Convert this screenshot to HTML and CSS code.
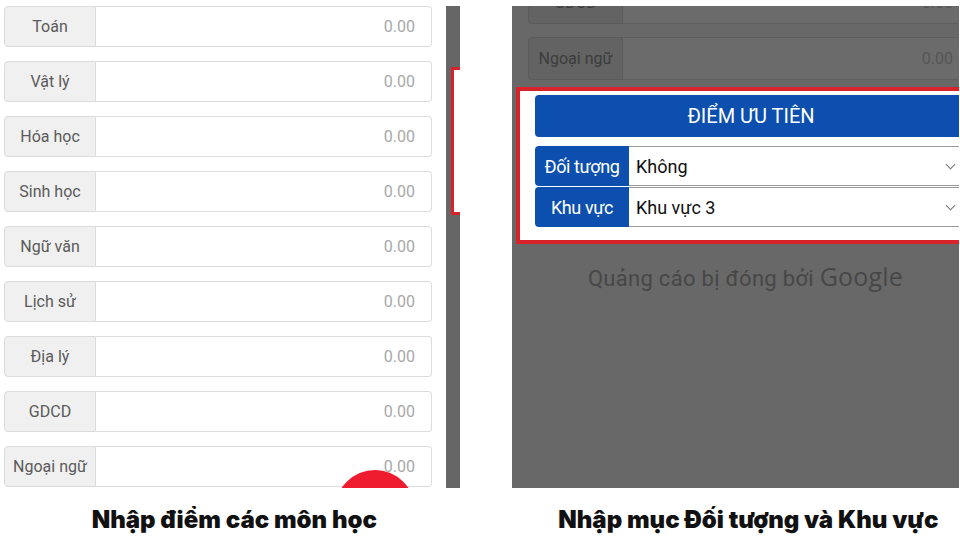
FILE: index.html
```html
<!DOCTYPE html>
<html lang="vi">
<head>
    <meta charset="UTF-8">
    <meta name="viewport" content="width=device-width, initial-scale=1.0">
    <title>Tính điểm xét tuyển</title>
    <link rel="stylesheet" href="styles.css">
</head>
<body>
    <div class="shots">
        <div class="left-shot">
            <div class="score-row"><div class="subject">Toán</div><div class="score">0.00</div></div>
            <div class="score-row"><div class="subject">Vật lý</div><div class="score">0.00</div></div>
            <div class="score-row"><div class="subject">Hóa học</div><div class="score">0.00</div></div>
            <div class="score-row"><div class="subject">Sinh học</div><div class="score">0.00</div></div>
            <div class="score-row"><div class="subject">Ngữ văn</div><div class="score">0.00</div></div>
            <div class="score-row"><div class="subject">Lịch sử</div><div class="score">0.00</div></div>
            <div class="score-row"><div class="subject">Địa lý</div><div class="score">0.00</div></div>
            <div class="score-row"><div class="subject">GDCD</div><div class="score">0.00</div></div>
            <div class="score-row"><div class="subject">Ngoại ngữ</div><div class="score">0.00</div></div>
            <div class="fab"></div>
        </div>

        <div class="strip"><div class="bracket"></div></div>

        <div class="right-shot">
            <div class="dim-row first"><div class="dim-subject">GDCD</div><div class="dim-score">0.00</div></div>
            <div class="dim-row"><div class="dim-subject">Ngoại ngữ</div><div class="dim-score">0.00</div></div>

            <div class="priority-box">
                <div class="priority-head">ĐIỂM ƯU TIÊN</div>
                <div class="pick-row">
                    <div class="pick-label">Đối tượng</div>
                    <div class="pick-value">Không<span class="chevron"></span></div>
                </div>
                <div class="pick-row">
                    <div class="pick-label">Khu vực</div>
                    <div class="pick-value">Khu vực 3<span class="chevron"></span></div>
                </div>
            </div>

            <div class="ad-note">Quảng cáo bị đóng bởi <span class="brand">Google</span></div>
        </div>
    </div>

    <div class="captions">
        <div class="caption left-cap">Nhập điểm các môn học</div>
        <div class="caption right-cap">Nhập mục Đối tượng và Khu vực</div>
    </div>
</body>
</html>
```

FILE: styles.css
```css
body {
    margin: 0;
    background-color: #fff;
    font-family: Roboto, "Noto Sans", Arial, sans-serif;
}
.shots {
    display: flex;
    height: 488px;
}
/* ảnh trái: bảng nhập điểm */
.left-shot {
    position: relative;
    width: 428px;
    padding: 6px 14px 0 4px;
    display: flex;
    flex-direction: column;
    gap: 14px;
    overflow: hidden;
}
.score-row {
    display: flex;
    height: 41px;
    flex-shrink: 0;
}
.subject {
    width: 90px;
    display: flex;
    align-items: center;
    justify-content: center;
    background-color: #f0f0f0;
    border: 1px solid #dcdcdc;
    border-radius: 4px 0 0 4px;
    color: #5a5a5a;
    font-size: 16px;
}
.score {
    flex: 1;
    display: flex;
    align-items: center;
    justify-content: flex-end;
    padding-right: 16px;
    background-color: #fff;
    border: 1px solid #dcdcdc;
    border-left: none;
    border-radius: 0 4px 4px 0;
    color: #a8a8a8;
    font-size: 16px;
}
.fab {
    position: absolute;
    left: 335px;
    top: 470px;
    width: 80px;
    height: 80px;
    border-radius: 50%;
    background-color: #ee1c2e;
}
.strip {
    position: relative;
    width: 14px;
    margin-top: 6px;
    background-color: #666;
}
.bracket {
    position: absolute;
    top: 61px;
    left: 5px;
    width: 6px;
    height: 142px;
    border: 3px solid #d8232a;
    border-right: none;
    background-color: #fff;
}
/* ảnh phải: điểm ưu tiên */
.right-shot {
    position: relative;
    width: 447px;
    margin: 6px 0 0 52px;
    background-color: #686868;
    overflow: hidden;
}
.dim-row {
    display: flex;
    width: 446px;
    height: 43px;
    margin: 13px 0 0 16px;
}
.dim-row.first {
    margin-top: -25px;
}
.dim-subject {
    width: 93px;
    display: flex;
    align-items: center;
    justify-content: center;
    background-color: #636363;
    border: 1px solid #5b5b5b;
    border-radius: 4px 0 0 4px;
    color: #3c3c3c;
    font-size: 16px;
}
.dim-score {
    flex: 1;
    display: flex;
    align-items: center;
    justify-content: flex-end;
    padding-right: 20px;
    background-color: #6b6b6b;
    border: 1px solid #5f5f5f;
    border-left: none;
    color: #555;
    font-size: 16px;
}
.priority-box {
    width: 460px;
    margin: 7px 0 0 4px;
    padding: 4px 0 12px 15px;
    background-color: #fff;
    border: 4px solid #d8232a;
    border-right: none;
}
.priority-head {
    height: 42px;
    display: flex;
    align-items: center;
    justify-content: center;
    padding-right: 28px;
    margin-bottom: 9px;
    background-color: #0c4fae;
    border-radius: 4px 0 0 4px;
    color: #fff;
    font-size: 20px;
}
.pick-row {
    display: flex;
    height: 40px;
    margin-bottom: 1px;
}
.pick-label {
    width: 94px;
    display: flex;
    align-items: center;
    justify-content: center;
    background-color: #0c4fae;
    border-radius: 4px 0 0 4px;
    color: #fff;
    font-size: 18px;
    letter-spacing: -0.4px;
}
.pick-value {
    position: relative;
    flex: 1;
    display: flex;
    align-items: center;
    padding-left: 7px;
    border-top: 1px solid #9a9a9a;
    border-bottom: 1px solid #9a9a9a;
    color: #111;
    font-size: 18px;
}
.chevron {
    position: absolute;
    left: 318px;
    top: 14px;
    width: 6px;
    height: 6px;
    border-right: 1.5px solid #777;
    border-bottom: 1.5px solid #777;
    transform: rotate(45deg);
}
.ad-note {
    margin: 15px 0 0 0;
    padding-left: 20px;
    text-align: center;
    color: #474747;
    font-size: 22px;
    letter-spacing: 0.3px;
    font-family: Roboto, "Open Sans", sans-serif;
}
.brand {
    font-family: "Open Sans", Roboto, sans-serif;
    font-size: 25px;
    font-weight: 500;
    letter-spacing: 0.2px;
}
/* chú thích */
.captions {
    display: flex;
}
.caption {
    padding-top: 17px;
    text-align: center;
    color: #111;
    font-family: Inter, "Noto Sans", sans-serif;
    font-weight: 900;
    font-size: 24px;
}
.left-cap {
    width: 470px;
    padding-left: 16px;
    box-sizing: border-box;
}
.right-cap {
    width: 500px;
    margin-left: 24px;
    padding-left: 60px;
    box-sizing: border-box;
}
```
